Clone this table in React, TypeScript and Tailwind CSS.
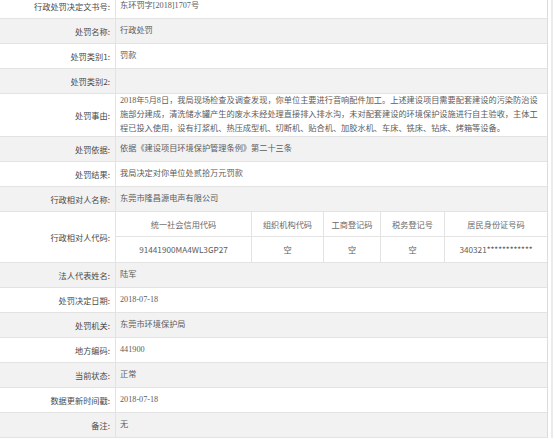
import type { ReactNode } from 'react';

const SANS = "font-['Noto_Sans_CJK_SC','Liberation_Sans',sans-serif]";

type Row = { label: string; value?: ReactNode; tall?: boolean; codes?: boolean };

const REASON_LINES = [
  '2018年5月8日，我局现场检查及调查发现，你单位主要进行音响配件加工。上述建设项目需要配套建设的污染防治设',
  '施部分建成，清洗储水罐产生的废水未经处理直接排入排水沟，未对配套建设的环境保护设施进行自主验收，主体工',
  '程已投入使用，设有打浆机、热压成型机、切断机、贴合机、加胶水机、车床、铣床、钻床、烤箱等设备。',
];

const ROWS: Row[] = [
  { label: '行政处罚决定文书号:', value: '东环罚字[2018]1707号' },
  { label: '处罚名称:', value: '行政处罚' },
  { label: '处罚类别1:', value: '罚款' },
  { label: '处罚类别2:', value: '' },
  { label: '处罚事由:', tall: true },
  { label: '处罚依据:', value: '依据《建设项目环境保护管理条例》第二十三条' },
  { label: '处罚结果:', value: '我局决定对你单位处贰拾万元罚款' },
  { label: '行政相对人名称:', value: '东莞市隆昌源电声有限公司' },
  { label: '行政相对人代码:', codes: true },
  { label: '法人代表姓名:', value: '陆军' },
  { label: '处罚决定日期:', value: '2018-07-18' },
  { label: '处罚机关:', value: '东莞市环境保护局' },
  { label: '地方编码:', value: '441900' },
  { label: '当前状态:', value: '正常' },
  { label: '数据更新时间戳:', value: '2018-07-18' },
  { label: '备注:', value: '无' },
];

const CODE_COLUMNS = [
  { title: '统一社会信用代码', value: '91441900MA4WL3GP27', width: 'w-[136px]' },
  { title: '组织机构代码', value: '空', width: 'w-[72px]' },
  { title: '工商登记码', value: '空', width: 'w-[57px]' },
  { title: '税务登记号', value: '空', width: 'w-[64px]' },
  { title: '居民身份证号码', value: '340321************', width: 'flex-1' },
];

function CodeTable() {
  return (
    <div className={`flex h-full w-full ${SANS}`}>
      {CODE_COLUMNS.map((col, i) => (
        <div
          key={col.title}
          className={`${col.width} flex flex-col ${i < CODE_COLUMNS.length - 1 ? 'border-r border-[#e3e3e3]' : ''}`}
        >
          <div className="flex h-[25px] items-center justify-center border-b border-[#e3e3e3] text-[#6a6a6a]">
            {col.title}
          </div>
          <div className="flex h-[25px] items-center justify-center text-[#5c5c5c]">{col.value}</div>
        </div>
      ))}
    </div>
  );
}

export default function App() {
  return (
    <div className="h-[440px] w-[554px] overflow-hidden bg-white text-[8.2px]">
      <div className="flex h-full">
        <div className="-mt-[6px] w-[548px] self-start border-r border-[#dcdcdc]">
          {ROWS.map((row, i) => {
            const height = row.codes ? 'h-[51px]' : row.tall ? 'h-[43px]' : 'h-[25px]';
            return (
              <div
                key={row.label}
                className={`flex ${height} border-b border-[#e3e3e3] ${i % 2 === 1 ? 'bg-[#f2f2f2]' : 'bg-white'}`}
              >
                <div
                  className={`flex w-[116px] shrink-0 items-center justify-end border-r border-[#e3e3e3] pr-[5px] text-[#4a4a4a] ${SANS}`}
                >
                  {row.label}
                </div>
                <div className="flex min-w-0 flex-1 items-center">
                  {row.codes ? (
                    <CodeTable />
                  ) : row.tall ? (
                    <div className="whitespace-nowrap pl-[4px] font-['Liberation_Serif','Noto_Sans_CJK_SC',serif] leading-[14px] text-[#5c5c5c]">
                      {REASON_LINES.map(line => (
                        <div key={line}>{line}</div>
                      ))}
                    </div>
                  ) : (
                    <div className="whitespace-nowrap pl-[4px] font-['Liberation_Serif','Noto_Sans_CJK_SC',serif] text-[#5c5c5c]">
                      {row.value}
                    </div>
                  )}
                </div>
              </div>
            );
          })}
        </div>
        <div className="w-[3px]" />
        <div className="h-[438px] w-[2px] bg-[#ebebeb]" />
      </div>
    </div>
  );
}
